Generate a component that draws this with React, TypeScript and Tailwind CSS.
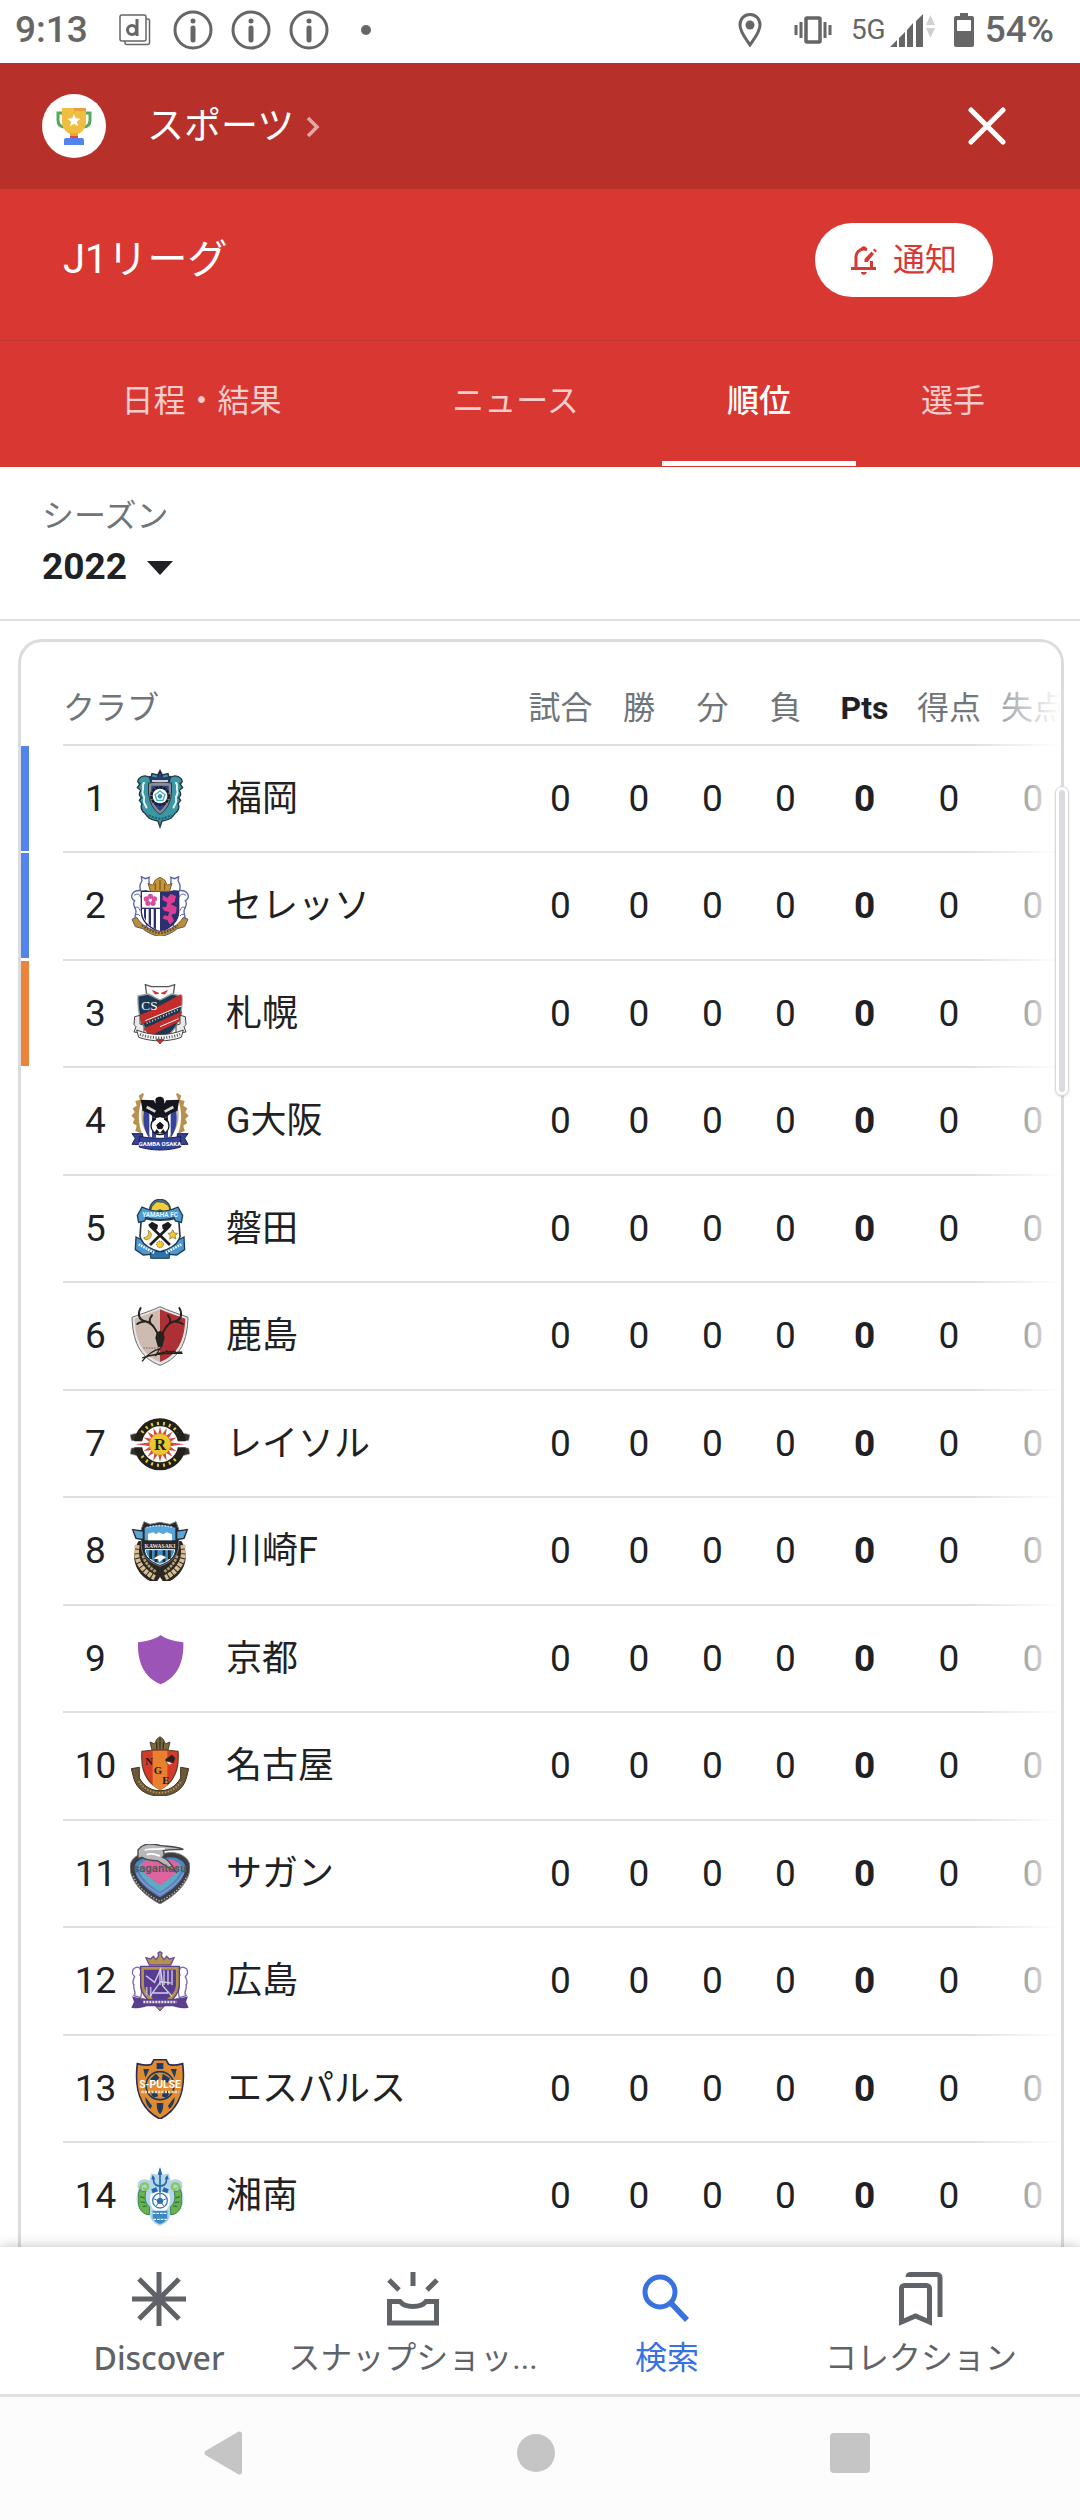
import React from 'react';

type Zone = 'acl' | 'playoff' | null;

interface Club {
  name: string;
  crest: React.FC;
  zone: Zone;
}

const Avispa = () => (
  <>
    <path d="M90 4l7 14 17-4 4 14c10-10 26-10 34 0 8 8 4 14-2 16l8 12-10 8c6 10 4 18-2 22l6 8-8 10c6 12 0 24-8 28l-8 10c-8 10-20 12-32 14l-6 18-6-18c-12-2-24-4-32-14l-8-10c-8-4-14-16-8-28l-8-10 6-8c-6-4-8-12-2-22l-10-8 8-12c-6-2-10-8-2-16 8-10 24-10 34 0l4-14 17 4z" fill="#3a97a3" stroke="#27343f" strokeWidth="4" />
    <path d="M44 40c-10 4-2 16-6 26s8 14 4 26 6 14 8 26M136 40c10 4 2 16 6 26s-8 14-4 26-6 14-8 26" fill="none" stroke="#e2f3f4" strokeWidth="6" />
    <path d="M58 22l22 6 10-20 10 20 22-6-4 18H62z" fill="#2b3c7c" stroke="#222d4a" strokeWidth="3" />
    <path d="M56 42c20-4 48-4 68 0 4 44-6 74-34 94-28-20-38-50-34-94z" fill="#8a8d96" stroke="#2c3340" strokeWidth="3" />
    <path d="M64 50h52c2 34-4 58-26 76-22-18-28-42-26-76z" fill="#30438a" />
    <path d="M66 36h48" stroke="#c9ccd2" strokeWidth="6" />
    <circle cx="90" cy="81" r="26" fill="none" stroke="#1c1c22" strokeWidth="8" strokeDasharray="9 3" />
    <circle cx="90" cy="81" r="22" fill="#fff" />
    <path d="M90 66l15 11-6 17H81l-6-17z" fill="none" stroke="#45adc1" strokeWidth="4" />
    <circle cx="90" cy="82" r="7" fill="#2ba0b8" />
    <path d="M56 138c20 14 48 14 68 0" fill="none" stroke="#1f6a78" strokeWidth="6" strokeDasharray="7 3" />
  </>
);

const Cerezo = () => (
  <>
    <path d="M34 44C6 40-4 66 14 74c-10 14 6 22 4 34s-8 24 2 36l30 8V44zM146 44c28-4 38 22 20 30 10 14-6 22-4 34s8 24-2 36l-30 8V44z" fill="#fff" stroke="#5a66a3" strokeWidth="4" />
    <path d="M32 44c-6-16 0-24 4-30l-2-12 12 6 12-4c-4 12 2 22 2 36M148 44c6-16 0-24-4-30l2-12-12 6-12-4c4 12-2 22-2 36" fill="#fff" stroke="#5a66a3" strokeWidth="4" />
    <path d="M12 58q16-10 20 6M12 96q14-8 18 8M168 58q-16-10-20 6M168 96q-14-8-18 8M18 116q8-4 12 4M162 116q-8-4-12 4" fill="none" stroke="#5a66a3" strokeWidth="3" />
    <path d="M34 46h112v60c0 34-30 52-56 62-26-10-56-28-56-62z" fill="#fff" stroke="#242a63" strokeWidth="4" />
    <path d="M90 46h56v60c0 34-30 52-56 62z" fill="#2b3070" />
    <path d="M42 98h6v36l-6-10zM56 98h7v52l-7-6zM71 98h7v62l-7-4z" fill="#2b3070" />
    <path d="M34 97h56" stroke="#2b3070" strokeWidth="4" />
    <g fill="#d6509d">
      <circle cx="61" cy="61" r="8" />
      <circle cx="73" cy="69" r="8" />
      <circle cx="69" cy="82" r="8" />
      <circle cx="54" cy="82" r="8" />
      <circle cx="49" cy="69" r="8" />
    </g>
    <circle cx="61" cy="73" r="4" fill="#fff" />
    <path d="M98 58l14 8 10-12 16 6-4 18-12 6 18 10-2 18-14 4 8 18-12 12-8-14-14-4 4-10 12 2 4-12-16-4-6-12 12 2 4-14-14-8z" fill="#dd3d90" />
    <path d="M62 46l-8-24 14 6 8-16 14-8 14 8 8 16 14-6-8 24z" fill="#c7963c" stroke="#7d5c22" strokeWidth="3" />
    <path d="M76 22v20M90 12v30M104 22v20" stroke="#7d5c22" strokeWidth="4" />
    <path d="M6 130l14-6c16 26 40 38 70 42 30-4 54-16 70-42l14 6-10 22-22 6c-14 12-32 20-52 24-20-4-38-12-52-24l-22-6z" fill="#b98d3a" stroke="#5f5a66" strokeWidth="3" />
    <path d="M36 148c16 14 34 20 54 24 20-4 38-10 54-24" fill="none" stroke="#5c4a2c" strokeWidth="6" strokeDasharray="5 4" />
  </>
);

const Consadole = () => (
  <>
    <path d="M46 2l18 6h52l18-6-6 44-38 12-38-12z" fill="#fff" stroke="#555" strokeWidth="4" />
    <path d="M68 20l18 8-10 2zM112 20l-18 8 10 2z" fill="#d92b2b" stroke="#d92b2b" strokeWidth="3" />
    <path d="M24 36l30-6c12 4 20 12 36 18 16-6 24-14 36-18l30 6c2 62-12 104-66 136C36 140 22 98 24 36z" fill="#1d3850" stroke="#9aa0a6" strokeWidth="4" />
    <path d="M66 78l88-48v34L34 122l-6-28zM40 134l116-52-4 28-92 46z" fill="#c42d2a" />
    <path d="M46 110l108-44M90 128l56-24" stroke="#fff" strokeWidth="3" />
    <path d="M50 118l96-42" stroke="#d8dde2" strokeWidth="5" strokeDasharray="3 6" />
    <text x="34" y="78" fontSize="40" fill="#fff" className="font-['Liberation_Serif',serif]">CS</text>
    <path d="M14 98l16-4v26l12 4v24l-30-4 6-16-6-6zM166 98l-16-4v26l-12 4v24l30-4-6-16 6-6z" fill="#e9e9e9" stroke="#444" strokeWidth="3" />
    <path d="M20 138c44 18 96 18 140 0l-6 22c-40 14-88 14-128 0z" fill="#f4f4f4" stroke="#444" strokeWidth="3" />
    <path d="M30 151c36 14 84 14 120 0" fill="none" stroke="#555" strokeWidth="8" strokeDasharray="3 5" />
    <path d="M78 166h24l-12 14z" fill="#c42d2a" stroke="#444" strokeWidth="2" />
  </>
);

const Gamba = () => (
  <>
    <path d="M38 6l-12 8 4 12-14 4 4 14-12 8 6 12-10 10 10 10-6 12 12 8-4 16 20 8c-16-40-10-84 6-118zM142 6l12 8-4 12 14 4-4 14 12 8-6 12 10 10-10 10 6 12-12 8 4 16-20 8c16-40 10-84-6-118z" fill="#b8914e" />
    <path d="M38 50c30-6 74-6 104 0 8 44-8 86-52 110-44-24-60-66-52-110z" fill="#fff" stroke="#c8a86a" strokeWidth="4" />
    <path d="M42 54h16v88c-16-24-22-54-16-88zM122 54h16c6 34 0 64-16 88zM66 60h12v80H66zM102 60h12v80h-12z" fill="#34439b" />
    <path d="M32 26l40 2 4 10c2-8-2-12 2-16 6-6 18-6 22 0 4 6 2 12 4 16l4-10 40-2-6 34-18 6-12 10-22 6-22-6-12-10-18-6z" fill="#15161c" />
    <path d="M50 48l26 14M130 48l-26 14" stroke="#d9d9d9" strokeWidth="8" />
    <circle cx="90" cy="104" r="27" fill="#fff" stroke="#15161c" strokeWidth="4" />
    <path d="M90 94l10 8-4 11H84l-4-11zM68 92l10-8-10-2zM112 92l-10-8 10-2zM76 124l4-8 8 10zM104 124l-4-8-8 10z" fill="#15161c" stroke="#15161c" strokeWidth="3" />
    <path d="M6 128h32v30c-10 4-22 2-32 2l10-18zM174 128h-32v30c10 4 22 2 32 2l-10-18z" fill="#34439b" stroke="#1b214f" strokeWidth="3" />
    <path d="M28 136c40 8 84 8 124 0v32c-40 12-84 12-124 0z" fill="#34439b" stroke="#1b214f" strokeWidth="3" />
    <text x="90" y="165" textAnchor="middle" fontSize="18" fontWeight="700" fill="#fff">GAMBA OSAKA</text>
  </>
);

const Jubilo = () => (
  <>
    <circle cx="90" cy="32" r="31" fill="#3a80bd" stroke="#3b4046" strokeWidth="4" />
    <path d="M66 22l14-14 20 2 16 10 4 14-16 6-14-8-16 8-12-6z" fill="#f2cc3a" stroke="#514a22" strokeWidth="3" />
    <path d="M34 56c36 10 76 10 112 0l4 56c-6 28-32 44-60 56-28-12-54-28-60-56z" fill="#fff" stroke="#2b3942" strokeWidth="5" />
    <path d="M22 50l14-26c34 16 74 16 108 0l14 26-4 20-18-4-4-10c-28 8-56 8-84 0l-4 10-18 4z" fill="#4b98d2" stroke="#1f3b52" strokeWidth="4" />
    <text x="90" y="53" textAnchor="middle" fontSize="19" fontWeight="700" fill="#e9f4fb">YAMAHA FC</text>
    <path d="M60 80l60 58M120 80l-60 58" stroke="#1b1c20" strokeWidth="8" />
    <path d="M54 78l12-10 18 10-2 12-10 6-8-10zM126 78l-12-10-18 10 2 12 10 6 8-10z" fill="#1b1c20" />
    <path d="M54 94c14 6 14 24-4 28-8 0-10-6-8-6 14-2 16-14 12-22zM128 92l5 10 10 1-8 7 3 10-10-5-9 5 2-10-7-7 9-1z" fill="#f0c832" stroke="#7d6420" strokeWidth="2" />
    <circle cx="90" cy="136" r="10" fill="#f0c832" stroke="#7d6420" strokeWidth="3" strokeDasharray="4 3" />
    <path d="M18 114l16 8c10 22 34 30 56 36 22-6 46-14 56-36l16-8 2 38-24 16-24-2-26 10-26-10-24 2-24-16z" fill="#4b98d2" stroke="#1f3b52" strokeWidth="4" />
    <path d="M62 158h56v20H62z" fill="#2f73ab" stroke="#1f3b52" strokeWidth="3" />
    <path d="M26 136l48 26M154 136l-48 26" stroke="#e9f4fb" strokeWidth="8" strokeDasharray="5 3" />
  </>
);

const Antlers = () => (
  <>
    <path d="M90 2c-24 12-52 20-84 32 2 66 20 120 84 144 64-24 82-78 84-144-32-12-60-20-84-32z" fill="#e5e5e5" stroke="#6a6a6a" strokeWidth="3" />
    <path d="M90 10c-24 10-48 18-76 28 2 60 20 108 76 130z" fill="#cdbab0" />
    <path d="M90 10c24 10 48 18 76 28-2 60-20 108-76 130z" fill="#ad3034" />
    <path d="M84 84C74 66 66 50 46 46 26 42 22 24 32 6M46 46c-8 2-18 2-24 8M70 60c-14-8-14-20-4-32M96 84c10-18 18-34 38-38 20-4 24-22 14-40M134 46c8 2 18 2 24 8M110 60c14-8 14-20 4-32" fill="none" stroke="#26221f" strokeWidth="6" strokeLinecap="round" />
    <path d="M80 80l10-6 10 6 4 16-8 28h-12l-8-28z" fill="#26221f" />
    <path d="M40 126h44" stroke="#7d6d66" strokeWidth="3" strokeDasharray="5 3" />
    <path d="M36 166c16-20 38-34 54-38l-14 22c10-12 16-12 14-4 8-12 12-8 10-2 12-14 16-10 12-2 10-10 14-6 10 0 10-10 16-6 12-2l22-2M36 156c28-12 60-16 122-14" fill="none" stroke="#26221f" strokeWidth="4" />
  </>
);

const RAYS = Array.from({ length: 16 }, (_, i) => i * 22.5);

const Reysol = () => (
  <>
    <path d="M0 62l24-6v26L4 80zM180 62l-24-6v26l20-2zM0 120l24 6v-26l-20 2zM180 120l-24 6v-26l20 2z" fill="#34312c" stroke="#bbb" strokeWidth="2" />
    <circle cx="90" cy="91" r="66" fill="#fff" stroke="#23211c" strokeWidth="24" />
    <path d="M0 82h180v18H0z" fill="#fff" />
    {RAYS.map((angle) => (
      <path key={angle} d="M84 62l6-24 6 24z" fill="#cf4a42" transform={`rotate(${angle} 90 91)`} />
    ))}
    <path d="M16 91l48-6v12zM164 91l-48-6v12z" fill="#cf4a42" />
    <circle cx="90" cy="91" r="32" fill="#edc72e" stroke="#d9992e" strokeWidth="2" />
    <text x="90" y="108" textAnchor="middle" fontSize="50" fontWeight="700" fill="#23211c" className="font-['Liberation_Serif',serif]">R</text>
    <path d="M36 56a66 66 0 0 1 108 0M36 126a66 66 0 0 0 108 0" fill="none" stroke="#dccb3c" strokeWidth="10" strokeDasharray="6 12" />
  </>
);

const Frontale = () => (
  <>
    <path d="M26 60c-26 40-14 96 34 120h22l8-12 8 12h22c48-24 60-80 34-120z" fill="#2b2722" />
    <path d="M22 72c-10 40 10 76 52 98M158 72c10 40-10 76-52 98" fill="none" stroke="#d5bc92" strokeWidth="15" strokeDasharray="11 3" />
    <path d="M38 104c8 22 22 38 42 50M142 104c-8 22-22 38-42 50" fill="none" stroke="#b59b70" strokeWidth="8" strokeDasharray="8 3" />
    <path d="M42 2l18 8 30-6 30 6 18-8 8 22v50c0 34-26 50-56 62-30-12-56-28-56-62V24z" fill="#26282b" stroke="#777" strokeWidth="3" />
    <path d="M44 20c30-10 62-10 92 0v38H44z" fill="#5aa6d8" />
    <path d="M8 26l32 4v26l-22-4zM172 26l-32 4v26l22-4z" fill="#5aa6d8" stroke="#26282b" strokeWidth="4" />
    <path d="M54 38l16-4 8 6 8-6 14 6 10-6 16 6v18H54z" fill="#fff" />
    <path d="M50 20c26-8 54-8 80 0" fill="none" stroke="#b7dcf2" strokeWidth="5" strokeDasharray="5 4" />
    <text x="90" y="80" textAnchor="middle" fontSize="17" fontWeight="700" fill="#e6e6e6" className="font-['Liberation_Serif',serif]">KAWASAKI</text>
    <path d="M46 86h88c-2 24-20 36-44 44-24-8-42-20-44-44z" fill="#3d8ec8" stroke="#fff" strokeWidth="3" />
    <path d="M62 88v26M78 88v36M102 88v36M118 88v26" stroke="#26282b" strokeWidth="8" />
    <path d="M72 114c10-14 26-14 36-4l-12 6-8 8-4-10z" fill="#fff" />
  </>
);

const Kyoto = () => (
  <path d="M92 18c16 12 38 18 68 22 2 60-18 106-68 126-50-20-70-66-68-126 30-4 52-10 68-22z" fill="#9c54b6" />
);

const Grampus = () => (
  <>
    <path d="M4 98l24-4v32c16 28 38 38 62 38s46-10 62-38V94l24 4-6 24c-8 38-40 58-80 58s-72-20-80-58z" fill="#6c5837" stroke="#3e3220" strokeWidth="3" />
    <path d="M26 136c30 46 98 46 128 0" fill="none" stroke="#b8a06c" strokeWidth="5" strokeDasharray="4 5" />
    <path d="M66 42l-6-24 14 6 6-14 10-8 10 8 6 14 14-6-6 24z" fill="#7b6a42" stroke="#4c4129" strokeWidth="3" />
    <path d="M80 18v20M90 6v32M100 18v20" stroke="#3e3220" strokeWidth="4" />
    <path d="M36 46c36-6 72-6 108 0 4 48-8 92-54 114C44 138 32 94 36 46z" fill="#d63a2c" stroke="#5e4628" strokeWidth="4" />
    <path d="M68 44h44v104c-6 6-14 10-22 14-8-4-16-8-22-14z" fill="#e9802e" />
    <path d="M106 70l20-14 10 10-6 16-12-6-10 4z" fill="#26221f" />
    <path d="M108 76l18 6-8 4z" fill="#fff" />
    <g fontSize="32" fontWeight="700" fill="#201c18" className="font-['Liberation_Serif',serif]">
      <text x="46" y="86">N</text>
      <text x="71" y="114">G</text>
      <text x="97" y="144">E</text>
    </g>
  </>
);

const Sagan = () => (
  <>
    <path d="M90 180C46 156 0 116 0 68 0 34 54 12 90 34c36-22 90 0 90 34 0 48-46 88-90 112z" fill="#3e3e42" stroke="#8a8a8a" strokeWidth="3" />
    <path d="M90 160C54 140 14 108 14 70c0-26 48-42 76-20 28-22 76-6 76 20 0 38-40 70-76 90z" fill="#4c87bf" />
    <path d="M90 144C60 126 26 98 26 70c6-22 44-28 64-12 20-16 58-10 64 12 0 28-34 56-64 74z" fill="#5fa9c4" />
    <path d="M90 122C60 104 32 84 34 60c12-18 42-18 56-2 14-16 44-16 56 2 2 24-26 44-56 64z" fill="#df639f" />
    <path d="M90 152C60 134 30 114 20 88M90 152c30-18 60-38 70-64" fill="none" stroke="#a08fcb" strokeWidth="4" />
    <path d="M10 96c12 34 44 58 80 76 36-18 68-42 80-76" fill="none" stroke="#bdbdbd" strokeWidth="4" strokeDasharray="4 5" />
    <path d="M24 18C40-4 62-2 90 4c24 4 46 2 70 12-20 2-36 0-60 4 4 10 4 14-2 20 14 4 26 18 40 44-20-12-36-22-56-34-20 0-36-4-46-10l-12 4z" fill="#b8b8bb" stroke="#47474b" strokeWidth="4" />
    <path d="M44 18c20-6 40 0 60-4M50 32c16-6 30 0 40 4" fill="none" stroke="#fff" strokeWidth="5" />
    <text x="90" y="84" textAnchor="middle" fontSize="34" fontWeight="700" fill="#56565a">sagantosu</text>
  </>
);

const Sanfrecce = () => (
  <>
    <path d="M10 54c18-14 26 2 20 18 10 12 0 22 2 34s6 18 0 34l-20-6c10-12-6-18 0-32-8-8 0-18 2-26-8-4-8-14-4-22zM170 54c-18-14-26 2-20 18-10 12 0 22-2 34s-6 18 0 34l20-6c-10-12 6-18 0-32 8-8 0-18-2-26 8-4 8-14 4-22z" fill="#fff" stroke="#7c69a8" strokeWidth="4" />
    <path d="M58 42l-10-22 14 4 8-8 8 10 8-12-2-8 6-4 6 4-2 8 8 12 8-10 8 8 14-4-10 22z" fill="#b3924a" stroke="#6b4f9a" strokeWidth="4" />
    <path d="M32 46h116v52c0 34-24 54-58 74-34-20-58-40-58-74z" fill="#b3924a" stroke="#5c3f8d" strokeWidth="4" />
    <path d="M42 56h96v44c0 26-22 42-48 58-26-16-48-32-48-58z" fill="#563d92" />
    <path d="M90 54v48M102 58v44M114 58v44M126 58v44M50 108v24M62 108v32" stroke="#b9b0cf" strokeWidth="5" />
    <path d="M48 74l26 20 18-40 6 50 28 32M60 136l32-44 30 4M70 126h44" fill="none" stroke="#d7d1e4" strokeWidth="4" />
    <path d="M6 136c20 8 30 4 42 8h84c12-4 22 0 42-8l-6 16 8 18c-20 4-34 0-46-4H50c-12 4-26 8-46 4l8-18z" fill="#5c3f8d" />
    <path d="M40 153h100" stroke="#e9e4f2" strokeWidth="8" strokeDasharray="6 3" />
    <path d="M78 166h24l-12 14z" fill="#b3924a" stroke="#5c3f8d" strokeWidth="3" />
  </>
);

const SPulse = () => (
  <>
    <path d="M72 2h36l8 14c12 6 26 2 42-2 8 66 0 132-68 166C22 146 14 80 22 14c16 4 30 8 42 2z" fill="#e08b2d" stroke="#2a2c55" strokeWidth="5" />
    <path d="M80 12h20v18H80zM80 132h20c0 14-2 26-10 34-8-8-10-20-10-34zM40 30h18l-12 26zM140 30h-18l12 26zM46 114l20 26-4 10c-10-8-16-20-16-36zM134 114l-20 26 4 10c10-8 16-20 16-36z" fill="#1e3a63" />
    <circle cx="90" cy="80" r="42" fill="#e08b2d" stroke="#1e3a63" strokeWidth="5" />
    <path d="M60 60l18-16 10 12-14 16zM98 44l22 14-8 14-16-8zM60 98l20-2 4 16-14 4zM98 96h24l-12 22-14-6z" fill="#1e3a63" />
    <text x="90" y="86" textAnchor="middle" fontSize="31" fontWeight="700" fill="#fff">S-PULSE</text>
    <path d="M34 99h112" stroke="#f3dcc0" strokeWidth="7" strokeDasharray="7 3" />
  </>
);

const Bellmare = () => (
  <>
    <path d="M90 0l7 26 19-4 6 22c24-12 44 4 32 28 16 34 0 66-32 74-4 18-18 28-32 34-14-6-28-16-32-34-32-8-48-40-32-74-12-24 8-40 32-28l6-22 19 4z" fill="#b4d6ec" />
    <path d="M58 122c-16-14-14-32-10-48-12 6-20-2-14-12-14 20-6 30-8 46-2 22 14 38 32 38zM122 122c16-14 14-32 10-48 12 6 20-2 14-12 14 20 6 30 8 46 2 22-14 38-32 38z" fill="#6bb24a" stroke="#35814c" strokeWidth="3" />
    <path d="M32 70c-4-22 24-24 22-6-2 10-14 8-12 0M148 70c4-22-24-24-22-6 2 10 14 8 12 0" fill="none" stroke="#8cc866" strokeWidth="8" />
    <path d="M62 84c18-10 38-10 56 0 6 26 0 48-28 60-28-12-34-34-28-60z" fill="#fff" />
    <path d="M90 8v72M70 32c0 20 4 28 20 28s20-8 20-28" fill="none" stroke="#2467a8" strokeWidth="5" />
    <path d="M90 6l7 20H83zM68 26l8 14H64zM112 26l4 14h-12zM64 70l14-6 6 12-16 6zM116 70l-14-6-6 12 16 6z" fill="#2467a8" />
    <circle cx="90" cy="104" r="22" fill="#fff" stroke="#3a7db5" strokeWidth="4" />
    <path d="M90 95l9 7-3 10H84l-3-10zM90 84v10M100 102l9-4M80 102l-9-4M96 112l5 8M84 112l-5 8" fill="#2a70ae" stroke="#2a70ae" strokeWidth="3" />
    <path d="M68 134h44v24c-6 8-14 14-22 16-8-2-16-8-22-16z" fill="#3a88c4" />
    <path d="M68 142h44M70 160h40" stroke="#fff" strokeWidth="4" strokeDasharray="8 3" />
    <path d="M30 92l14 4M32 108l14 2M38 122l12-2M150 92l-14 4M148 108l-14 2M142 122l-12-2" stroke="#2d7a45" strokeWidth="4" />
  </>
);

const CLUBS: Club[] = [
  { name: '福岡', crest: Avispa, zone: 'acl' },
  { name: 'セレッソ', crest: Cerezo, zone: 'acl' },
  { name: '札幌', crest: Consadole, zone: 'playoff' },
  { name: 'G大阪', crest: Gamba, zone: null },
  { name: '磐田', crest: Jubilo, zone: null },
  { name: '鹿島', crest: Antlers, zone: null },
  { name: 'レイソル', crest: Reysol, zone: null },
  { name: '川崎F', crest: Frontale, zone: null },
  { name: '京都', crest: Kyoto, zone: null },
  { name: '名古屋', crest: Grampus, zone: null },
  { name: 'サガン', crest: Sagan, zone: null },
  { name: '広島', crest: Sanfrecce, zone: null },
  { name: 'エスパルス', crest: SPulse, zone: null },
  { name: '湘南', crest: Bellmare, zone: null },
];

const STATS = ['試合', '勝', '分', '負', 'Pts', '得点', '失点'];

const TABS = ['日程・結果', 'ニュース', '順位', '選手'];

const InfoIcon = () => (
  <svg viewBox="0 0 40 40" className="w-10 h-10" aria-hidden>
    <circle cx="20" cy="20" r="18" fill="none" stroke="#666" strokeWidth="3" />
    <circle cx="20" cy="11" r="2.5" fill="#666" />
    <path d="M20 18v12" stroke="#666" strokeWidth="5" strokeLinecap="round" />
  </svg>
);

const StatusBar = () => (
  <div className="flex h-[63px] shrink-0 items-center justify-between pl-[15px] pr-[26px] pb-1 text-[#666] text-[37px] leading-none font-medium">
    <div className="flex items-center">
      <span>9:13</span>
      <svg viewBox="0 0 32 32" className="ml-[31px] mr-[22px] w-8 h-8" aria-hidden>
        <path d="M27 5h1.5a2 2 0 0 1 2 2v21.500a2 2 0 0 1-2 2H8a2 2 0 0 1-2-2V27" fill="none" stroke="#666" strokeWidth="1.5" />
        <rect x="1" y="1" width="26" height="26" rx="2" fill="none" stroke="#666" strokeWidth="1.5" />
        <circle cx="13" cy="16" r="4.5" fill="none" stroke="#666" strokeWidth="3" />
        <path d="M18 5v17" stroke="#666" strokeWidth="3" />
      </svg>
      <div className="flex gap-[18px]">
        <InfoIcon />
        <InfoIcon />
        <InfoIcon />
      </div>
      <span className="ml-8 h-[10px] w-[10px] rounded-full bg-[#666]" />
    </div>
    <div className="flex items-center">
      <svg viewBox="0 0 24 34" className="w-6 h-[34px]" aria-hidden>
        <path d="M12 1.5C6 1.5 2 6 2 12c0 7 6 14 10 20 4-6 10-13 10-20 0-6-4-10.500-10-10.500z" fill="none" stroke="#666" strokeWidth="3" />
        <circle cx="12" cy="12" r="4.5" fill="#666" />
      </svg>
      <svg viewBox="0 0 38 28" className="ml-8 w-[38px] h-7" aria-hidden>
        <rect x="12" y="2" width="14" height="24" rx="1" fill="none" stroke="#666" strokeWidth="3.5" />
        <path d="M7 6v16M31 6v16M2 9v10M36 9v10" stroke="#666" strokeWidth="3" />
      </svg>
      <span className="ml-[19px] text-[28px] leading-none font-normal">5G</span>
      <svg viewBox="0 0 46 34" className="ml-1 w-[46px] h-[34px]" aria-hidden>
        <path d="M0 34l7-7v7zM9 25l6-6v15H9zM17 17l6-7v24h-6zM26 8l7-7v33h-7z" fill="#666" />
        <path d="M36 12l4.500-10 4.500 10zM36 15l4.500 10 4.500-10z" fill="#d0d0d0" />
      </svg>
      <svg viewBox="0 0 20 34" className="ml-[18px] w-5 h-[34px]" aria-hidden>
        <path fillRule="evenodd" d="M6 0h8v3h4a2 2 0 0 1 2 2v27a2 2 0 0 1-2 2H2a2 2 0 0 1-2-2V5a2 2 0 0 1 2-2h4zM3 7v11h14V7z" fill="#666" />
      </svg>
      <span className="ml-[11px]">54%</span>
    </div>
  </div>
);

const TopBar = () => (
  <div className="flex h-[126px] shrink-0 items-center bg-[#b8302a] px-[42px] text-white">
    <span className="flex h-[64px] w-[64px] items-center justify-center rounded-full bg-white">
      <svg viewBox="0 0 36 38" className="w-9 h-[38px]" aria-hidden>
        <path d="M7 6H2v7c0 4 2 7 7 7M29 6h5v7c0 4-2 7-7 7" fill="none" stroke="#58a85c" strokeWidth="3" />
        <path d="M6 1h24v14c0 6-4 10-8 12h-8c-4-2-8-6-8-12z" fill="#efbd40" />
        <path d="M18 1h12v3H18z" fill="#e5a03c" />
        <path d="M14 26h8v4h-8z" fill="#e9a83a" />
        <path d="M14 29h8v3h-8z" fill="#d84a3a" />
        <path d="M8 33a2 2 0 0 1 2-2h16a2 2 0 0 1 2 2v5H8z" fill="#5384ee" />
        <path d="M18 7l1.800 4.300 4.700.4-3.600 3 1.100 4.600-4-2.500-4 2.500 1.100-4.600-3.600-3 4.700-.4z" fill="#fff" />
      </svg>
    </span>
    <a href="#sports" className="ml-[41px] flex items-center pt-[2px] text-[37px] leading-[48px]">
      スポーツ
      <svg viewBox="0 0 14 22" className="ml-3 w-[14px] h-[22px]" aria-hidden>
        <path d="M2 2l9 9-9 9" fill="none" stroke="#e3a8a6" strokeWidth="3.5" />
      </svg>
    </a>
    <button type="button" aria-label="閉じる" className="ml-auto mr-[32px]">
      <svg viewBox="0 0 38 38" className="w-[38px] h-[38px]" aria-hidden>
        <path d="M3 3l32 32M35 3L3 35" stroke="#fff" strokeWidth="5" strokeLinecap="round" />
      </svg>
    </button>
  </div>
);

const LeagueHeader = () => (
  <header className="shrink-0 bg-[#d93732] text-white">
    <div className="flex h-[152px] items-center justify-between border-b border-[#c53631] pl-[63px] pr-[87px] pb-[10px]">
      <h1 className="text-[40px] leading-[56px]">J1リーグ</h1>
      <button type="button" className="flex h-[74px] items-center gap-4 rounded-full bg-white px-9 text-[32px] leading-[40px] text-[#d93732]">
        <svg viewBox="0 0 26 30" className="w-[26px] h-[30px]" aria-hidden>
          <path d="M0 23.500h25M5 23V12c0-4 3-8 8-8 1 0 2 .3 3 .8M20.500 16v7" fill="none" stroke="currentColor" strokeWidth="3" />
          <path d="M10 4a2.800 2.800 0 0 1 5.600 0zM10 27h5.600a2.800 2.800 0 0 1-5.600 0z" fill="currentColor" />
          <path d="M13.500 17v-3l7-7.500 2.500 2.500-6.500 8zM22 5l1.500-1.500L26 6l-1.500 1.500z" fill="currentColor" />
        </svg>
        通知
      </button>
    </div>
    <nav className="grid h-[126px] grid-cols-[335fr_293fr_194fr_194fr] pl-[34px] pr-[30px]">
      {TABS.map((tab) => {
        const active = tab === '順位';
        return (
          <a
            key={tab}
            href={`#${tab}`}
            aria-current={active ? 'page' : undefined}
            className={`mb-px flex items-center justify-center border-b-[5px] text-[32px] leading-[40px] ${
              active ? 'border-b-white text-white font-medium' : 'border-b-transparent text-[#f6cdcc]'
            }`}
          >
            {tab}
          </a>
        );
      })}
    </nav>
  </header>
);

const SeasonFilter = () => (
  <div className="flex h-[154px] shrink-0 flex-col items-start border-b-2 border-[#e0e0e0] px-[42px] pt-[27px]">
    <label htmlFor="season" className="text-[32px] leading-[44px] text-[#70757a]">
      シーズン
    </label>
    <div className="relative mt-[5px]">
      <select
        id="season"
        defaultValue="2022"
        className="block appearance-none bg-transparent pr-[46px] text-[37px] leading-[48px] font-bold text-[#202124]"
      >
        <option value="2022">2022</option>
      </select>
      <svg viewBox="0 0 26 14" className="pointer-events-none absolute right-0 top-[18px] w-[26px] h-[14px]" aria-hidden>
        <path d="M0 0h26L13 14z" fill="#202124" />
      </svg>
    </div>
  </div>
);

const Standings = () => (
  <div className="relative mt-[18px] ml-[18px] mr-4 overflow-hidden rounded-t-[24px] border-[3px] border-b-0 border-[#dadce0]">
    <table className="w-[calc(100%+14px)] table-fixed border-separate border-spacing-0 text-[#202124]">
      <colgroup>
        <col className="w-[42px]" />
        <col className="w-[65px]" />
        <col className="w-[64px]" />
        <col />
        <col className="w-[83px]" />
        <col className="w-[74px]" />
        <col className="w-[73px]" />
        <col className="w-[73px]" />
        <col className="w-[85px]" />
        <col className="w-[84px]" />
        <col className="w-[84px]" />
      </colgroup>
      <thead>
        <tr className="h-[104px] align-bottom text-[32px] leading-[40px] text-[#70757a]">
          <td />
          <th colSpan={3} className="border-b-2 border-[#e0e0e0] pb-4 text-left font-normal">
            クラブ
          </th>
          {STATS.map((stat) => (
            <th
              key={stat}
              className={`border-b-2 border-[#e0e0e0] pb-4 whitespace-nowrap ${
                stat === 'Pts' ? 'font-bold text-[#202124]' : 'font-normal'
              }`}
            >
              {stat}
            </th>
          ))}
        </tr>
      </thead>
      <tbody>
        {CLUBS.map(({ name, crest: Crest, zone }, i) => (
          <tr key={name} className="odd:h-[107px] even:h-[108px] text-[37px] leading-[48px]">
            <td className="p-0 align-top">
              {zone && <div className={`h-[105px] w-2 ${zone === 'acl' ? 'bg-[#5384ec]' : 'bg-[#eb8439]'}`} />}
            </td>
            <td className="border-b-2 border-[#e0e0e0] p-0 text-center">{i + 1}</td>
            <td className="border-b-2 border-[#e0e0e0] p-0">
              <svg viewBox="0 0 180 180" className="mx-auto block w-[60px] h-[60px]" aria-hidden>
                <Crest />
              </svg>
            </td>
            <td className="border-b-2 border-[#e0e0e0] p-0 pl-[34px] text-[36px] whitespace-nowrap">{name}</td>
            {STATS.map((stat) => (
              <td
                key={stat}
                className={`border-b-2 border-[#e0e0e0] p-0 text-center ${stat === 'Pts' ? 'font-bold' : ''}`}
              >
                0
              </td>
            ))}
          </tr>
        ))}
      </tbody>
    </table>
    <div className="pointer-events-none absolute inset-y-0 right-0 w-[90px] bg-gradient-to-l from-white to-white/0" />
  </div>
);

const ScrollThumb = () => (
  <div className="absolute right-[11px] top-[319px] h-[310px] w-[14px] rounded-full border border-[#d8d8d8] bg-white p-[3px] shadow-sm">
    <div className="h-full rounded-full bg-[#dadae0]" />
  </div>
);

const NAV = [
  {
    label: 'Discover',
    icon: <path d="M27 0v54M0 27h54M7 7l40 40M47 7L7 47" fill="none" stroke="currentColor" strokeWidth="5" />,
  },
  {
    label: 'スナップショッ...',
    icon: (
      <path
        d="M27 0v14M3 8l10 10M51 8L41 18M3.500 29.500H14C19 36 35 36 40 29.500h10.500V51h-47z"
        fill="none"
        stroke="currentColor"
        strokeWidth="5"
      />
    ),
  },
  {
    label: '検索',
    icon: (
      <g fill="none" stroke="currentColor" strokeWidth="5">
        <circle cx="20" cy="20" r="15" />
        <path d="M30 30l17 18" strokeWidth="5.5" />
      </g>
    ),
  },
  {
    label: 'コレクション',
    icon: (
      <g fill="none" stroke="currentColor" strokeWidth="5">
        <path d="M7.500 50V16.500a3 3 0 0 1 3-3h22a3 3 0 0 1 3 3V50l-14-6z" />
        <path d="M14 5c0-1.500 1-2.500 3-2.500h26a3 3 0 0 1 3 3V45" />
      </g>
    ),
  },
];

const BottomNav = () => (
  <nav className="relative grid shrink-0 grid-cols-4 border-b-[3px] border-[#e0e0e0] bg-white px-8 pt-[25px] shadow-[0_0_12px_rgba(0,0,0,0.25)]">
    {NAV.map(({ label, icon }) => (
      <a
        key={label}
        href={`#${label}`}
        className={`flex h-[122px] flex-col items-center gap-3 text-[32px] leading-[40px] whitespace-nowrap ${
          label === '検索' ? 'text-[#3871e0]' : 'text-[#5f6368]'
        }`}
      >
        <svg viewBox="0 0 54 54" className="w-[54px] h-[54px]" aria-hidden>
          {icon}
        </svg>
        <span className={label === 'Discover' ? "font-medium font-['Noto_Sans',sans-serif]" : ''}>{label}</span>
      </a>
    ))}
  </nav>
);

const SystemNav = () => (
  <div className="relative flex h-[123px] shrink-0 items-center justify-between bg-[#fcfcfc] pl-[204px] pr-[210px] pb-3 text-[#c5c5c5]">
    <button type="button" aria-label="戻る">
      <svg viewBox="0 0 38 44" className="w-[38px] h-11" aria-hidden>
        <path d="M3 22L35.500 3v38z" fill="currentColor" stroke="currentColor" strokeWidth="5" strokeLinejoin="round" />
      </svg>
    </button>
    <button type="button" aria-label="ホーム" className="h-[38px] w-[38px] rounded-full bg-current" />
    <button type="button" aria-label="最近" className="h-10 w-10 rounded-[4px] bg-current" />
  </div>
);

export default function App() {
  return (
    <div className="flex h-screen flex-col bg-white font-['Roboto','Noto_Sans_CJK_JP',sans-serif]">
      <StatusBar />
      <TopBar />
      <main className="relative flex min-h-0 flex-1 flex-col overflow-hidden">
        <LeagueHeader />
        <div className="relative">
          <SeasonFilter />
          <Standings />
          <ScrollThumb />
        </div>
      </main>
      <BottomNav />
      <SystemNav />
    </div>
  );
}
